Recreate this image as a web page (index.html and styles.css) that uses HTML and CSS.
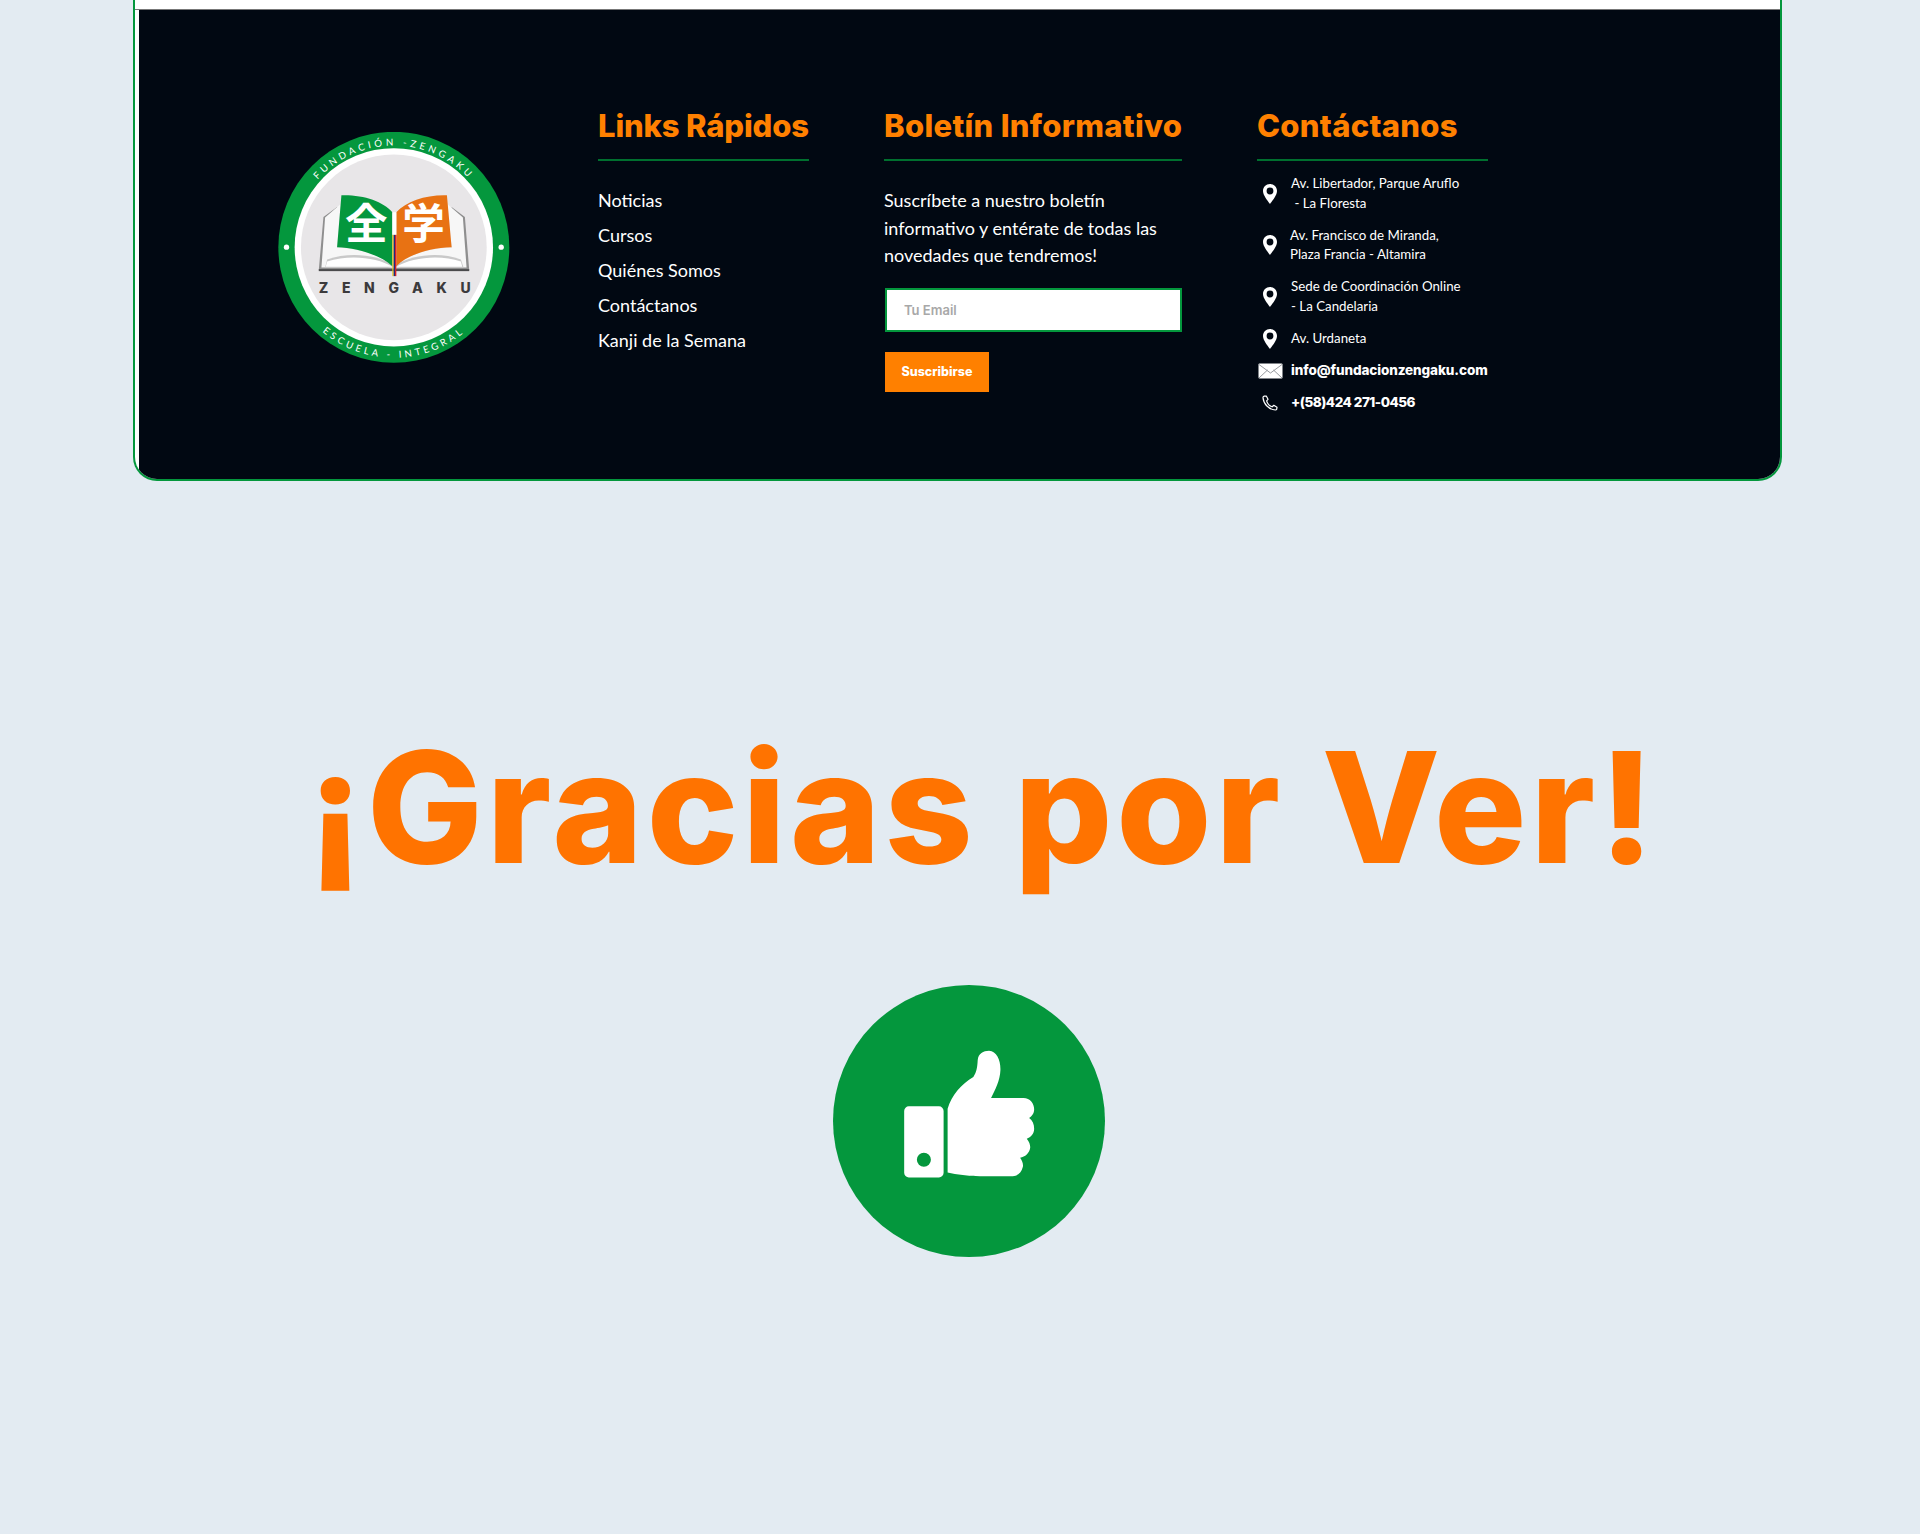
FILE: index.html
```html
<!DOCTYPE html>
<html lang="es">
<head>
<meta charset="utf-8">
<title>Gracias por Ver</title>
<link rel="stylesheet" href="styles.css">
</head>
<body>
<div class="card">
  <div class="card-strip"></div>
  <footer class="footer">
    <div class="logo-col">
      <svg class="logo" viewBox="85 37 696 694" role="img" aria-label="Fundación Zengaku">
        <defs>
          <path id="arc-top" d="M 127 383 A 305.500 305.500 0 0 1 738 383"></path>
          <path id="arc-bottom" d="M 100 383 A 332.500 332.500 0 0 0 765 383"></path>
        </defs>
        <circle cx="432.5" cy="383.5" r="347" fill="#04973d"></circle>
        <circle cx="432.5" cy="383.5" r="298" fill="#ffffff"></circle>
        <circle cx="432.5" cy="383.5" r="279" fill="#e8e6e8"></circle>
        <circle cx="110" cy="383" r="8" fill="#ffffff"></circle>
        <circle cx="755" cy="383" r="8" fill="#ffffff"></circle>
        <text class="logo-ring logo-ring-top"><textPath href="#arc-top" startOffset="50%" text-anchor="middle">FUNDACIÓN -ZENGAKU</textPath></text>
        <text class="logo-ring logo-ring-bottom"><textPath href="#arc-bottom" startOffset="50%" text-anchor="middle">ESCUELA - INTEGRAL</textPath></text>
        <path d="M207 452 L221 292 L262 262 L262 400 L428 446 L440 446 L606 400 L606 262 L646 292 L659 452 Z" fill="#8f8f8f"></path>
        <path d="M215 444 L226 294 L272 254 L262 384 C320 386 395 405 428 440 L428 444 Z" fill="#f7f7f7"></path>
        <path d="M651 444 L640 294 L594 254 L606 384 C540 386 475 405 440 440 L440 444 Z" fill="#f7f7f7"></path>
        <path d="M232 420 C300 396 385 406 428 436 L428 444 L226 444 Z" fill="#c9c9c9"></path>
        <path d="M634 420 C570 396 485 406 440 436 L440 444 L642 444 Z" fill="#c9c9c9"></path>
        <path d="M232 426 C300 404 385 414 428 442 L440 442 C485 414 570 404 634 426 L638 442 L228 442 Z" fill="#ffffff"></path>
        <path d="M275 227 C340 225 400 245 428 278 L428 440 C390 405 320 385 262 383 Z" fill="#04973d"></path>
        <path d="M440 278 C470 245 530 225 592 227 L606 383 C540 385 475 405 440 440 Z" fill="#e87213"></path>
        <rect x="207" y="449" width="452" height="6" fill="#4a4a4c"></rect>
        <rect x="428" y="278" width="12" height="68" fill="#ffffff"></rect>
        <rect x="428" y="346" width="4" height="124" fill="#e6c31a"></rect>
        <rect x="432" y="346" width="4" height="124" fill="#1d2a80"></rect>
        <rect x="436" y="346" width="4" height="124" fill="#d11f26"></rect>
        <text class="logo-kanji" x="350" y="360">全</text>
        <text class="logo-kanji" x="522" y="360">学</text>
        <text class="logo-name" x="207" y="520" textLength="456">ZENGAKU</text>
      </svg>
    </div>

    <section class="col col-links">
      <h3 class="col-title col-title-tight">Links Rápidos</h3>
      <ul class="links">
        <li>Noticias</li>
        <li>Cursos</li>
        <li>Quiénes Somos</li>
        <li>Contáctanos</li>
        <li>Kanji de la Semana</li>
      </ul>
    </section>

    <section class="col col-news">
      <h3 class="col-title">Boletín Informativo</h3>
      <p class="news-text">Suscríbete a nuestro boletín informativo y entérate de todas las novedades que tendremos!</p>
      <div class="news-input">Tu Email</div>
      <button class="news-button" type="button">Suscribirse</button>
    </section>

    <section class="col col-contact">
      <h3 class="col-title">Contáctanos</h3>
      <ul class="contact">
        <li class="contact-row">
          <span class="contact-icon"><svg class="pin" viewBox="0 0 14 20"><path fill-rule="evenodd" d="M7 0C3 0 0 3 0 7c0 4 4 9 7 13 3-4 7-9 7-13 0-4-3-7-7-7Zm0 3.6a3.4 3.4 0 1 1 0 6.8 3.4 3.4 0 0 1 0-6.8Z" fill="#fff"></path></svg></span>
          <span class="contact-text">Av. Libertador, Parque Aruflo<br>&nbsp;- La Floresta</span>
        </li>
        <li class="contact-row">
          <span class="contact-icon"><svg class="pin" viewBox="0 0 14 20"><path fill-rule="evenodd" d="M7 0C3 0 0 3 0 7c0 4 4 9 7 13 3-4 7-9 7-13 0-4-3-7-7-7Zm0 3.6a3.4 3.4 0 1 1 0 6.8 3.4 3.4 0 0 1 0-6.8Z" fill="#fff"></path></svg></span>
          <span class="contact-text contact-text-tight">Av. Francisco de Miranda,<br>Plaza Francia - Altamira</span>
        </li>
        <li class="contact-row">
          <span class="contact-icon"><svg class="pin" viewBox="0 0 14 20"><path fill-rule="evenodd" d="M7 0C3 0 0 3 0 7c0 4 4 9 7 13 3-4 7-9 7-13 0-4-3-7-7-7Zm0 3.6a3.4 3.4 0 1 1 0 6.8 3.4 3.4 0 0 1 0-6.8Z" fill="#fff"></path></svg></span>
          <span class="contact-text">Sede de Coordinación Online<br>- La Candelaria</span>
        </li>
        <li class="contact-row">
          <span class="contact-icon"><svg class="pin" viewBox="0 0 14 20"><path fill-rule="evenodd" d="M7 0C3 0 0 3 0 7c0 4 4 9 7 13 3-4 7-9 7-13 0-4-3-7-7-7Zm0 3.6a3.4 3.4 0 1 1 0 6.8 3.4 3.4 0 0 1 0-6.8Z" fill="#fff"></path></svg></span>
          <span class="contact-text">Av. Urdaneta</span>
        </li>
        <li class="contact-row">
          <span class="contact-icon"><svg class="mail" viewBox="0 0 25 16"><rect x="0.5" y="0.5" width="24" height="15" rx="1" fill="#fff"></rect><path d="M1 1.5 12.5 10 24 1.5M1 15l8.5-8M24 15l-8.500-8" fill="none" stroke="#8b8f94" stroke-width="0.9"></path></svg></span>
          <span class="contact-strong">info@fundacionzengaku.com</span>
        </li>
        <li class="contact-row">
          <span class="contact-icon"><svg class="phone" viewBox="0 0 16 16"><path d="M2.200 1.200 4.300 1 6 4.300 4.600 5.800C5.400 8.600 7.500 10.900 10.200 11.800L11.800 10.300 15 12.200 14.700 14.300C14.500 14.800 14 15 13.400 15 6.800 14.400 1.500 9 1 2.600 1 2 1.500 1.400 2.200 1.200Z" fill="none" stroke="#fff" stroke-width="1.200" stroke-linejoin="round"></path></svg></span>
          <span class="contact-strong contact-phone">+(58)424 271-0456</span>
        </li>
      </ul>
    </section>
  </footer>
</div>

<main class="thanks">
  <h1 class="thanks-title">¡Gracias por Ver!</h1>
  <svg class="thumb" viewBox="40 45 814 814" role="img" aria-label="Pulgar arriba">
    <circle cx="447" cy="452" r="407" fill="#04973d"></circle>
    <path fill="#fff" fill-rule="evenodd" d="M267 408H357A14 14 0 0 1 371 422V607A14 14 0 0 1 357 621H267A14 14 0 0 1 253 607V422A14 14 0 0 1 267 408ZM312 547A21 21 0 1 0 312 589A21 21 0 1 0 312 547Z"></path>
    <path fill="#fff" d="M383 415C395 375 425 340 460 320C470 305 472 290 473 270C475 250 490 242 507 242C530 244 542 270 541 300C540 330 525 360 513 383L610 383C630 383 642 400 642 417C642 430 635 438 627 443C637 450 642 462 642 475C642 490 632 500 620 505C628 515 631 525 630 533C628 548 615 560 600 562C607 572 610 582 608 590C604 607 592 617 578 617L480 617C445 617 410 612 383 606Z"></path>
  </svg>
</main>
</body>
</html>
```

FILE: styles.css
```css
* { box-sizing: border-box; }

html, body {
  margin: 0;
  padding: 0;
}

body {
  height: 1534px;
  overflow: hidden;
  background: #e3ebf2;
  font-family: Lato, "Noto Sans", sans-serif;
  color: #fff;
}

.card {
  width: 1649px;
  margin-left: 133px;
  background: #fff;
  border: 2px solid #04973d;
  border-top: 0;
  border-radius: 0 0 24px 24px;
  overflow: hidden;
}

.card-strip {
  height: 10px;
  background: #fff;
  border-bottom: 1px solid #777;
}

.footer {
  display: flex;
  align-items: flex-start;
  height: 469px;
  margin-left: 4px;
  padding: 92px 0 0 139px;
  background: #010812;
}

.logo-col {
  width: 232px;
  margin-top: 30px;
  margin-right: 88px;
}

.logo {
  display: block;
  width: 232px;
  height: 231px;
}

.logo-ring {
  font-family: Lato, sans-serif;
  font-size: 29px;
  fill: #fff;
}

.logo-ring-top { letter-spacing: 10.5px; }
.logo-ring-bottom { letter-spacing: 10px; }

.logo-kanji {
  font-family: "Noto Sans CJK JP", sans-serif;
  font-size: 128px;
  font-weight: 700;
  text-anchor: middle;
  fill: #fff;
}

.logo-name {
  font-family: Inter, sans-serif;
  font-size: 42px;
  font-weight: 800;
  fill: #3c3a3c;
}

.col-links { width: 211px; margin-right: 75px; }
.col-news { width: 298px; margin-right: 75px; }
.col-contact { width: 231px; }

.col-title {
  margin: 0;
  padding: 1px 0 11px;
  border-bottom: 2px solid #00702f;
  font-family: Inter, sans-serif;
  font-size: 31px;
  line-height: 45px;
  font-weight: 800;
  letter-spacing: 0.3px;
  white-space: nowrap;
  color: #ff8000;
}

.col-title-tight { letter-spacing: -0.15px; }

.links {
  margin: 22px 0 0;
  padding: 0;
  list-style: none;
  font-size: 18px;
  line-height: 35px;
}

.news-text {
  margin: 26px 0 0;
  font-size: 18px;
  line-height: 27.5px;
}

.news-input {
  display: flex;
  align-items: center;
  height: 44px;
  margin: 18px 0 0 1px;
  padding-left: 17px;
  background: #fff;
  border: 2px solid #04973d;
  font-family: Inter, sans-serif;
  font-size: 13px;
  font-weight: 600;
  color: #a8a8a8;
}

.news-button {
  display: block;
  width: 104px;
  height: 40px;
  margin: 20px 0 0 1px;
  padding: 0;
  border: 0;
  background: #ff8000;
  font-family: Inter, sans-serif;
  font-size: 12.5px;
  font-weight: 800;
  color: #fff;
}

.contact {
  display: flex;
  flex-direction: column;
  gap: 12.5px;
  margin: 13px 0 0;
  padding: 0;
  list-style: none;
}

.contact-row {
  display: flex;
  align-items: center;
  gap: 8px;
  font-size: 13.3px;
  line-height: 19.5px;
}

.contact-icon {
  display: flex;
  flex: none;
  justify-content: center;
  width: 26px;
}

.pin { display: block; width: 14px; height: 20px; }
.mail { display: block; width: 25px; height: 16px; }
.phone { display: block; width: 16px; height: 16px; }

.contact-text-tight { margin-left: -1px; }

.contact-strong {
  font-family: Inter, sans-serif;
  font-size: 13.5px;
  font-weight: 800;
  letter-spacing: -0.1px;
  white-space: nowrap;
}

.contact-phone { letter-spacing: -0.5px; }

.thanks {
  display: flex;
  flex-direction: column;
  align-items: center;
}

.thanks-title {
  margin: 236px 0 0 46px;
  font-family: Inter, sans-serif;
  font-size: 154px;
  line-height: 180px;
  font-weight: 800;
  letter-spacing: 3.9px;
  white-space: nowrap;
  color: #ff7300;
}

.thumb {
  display: block;
  width: 272px;
  height: 272px;
  margin: 88px 0 0 18px;
}
```
